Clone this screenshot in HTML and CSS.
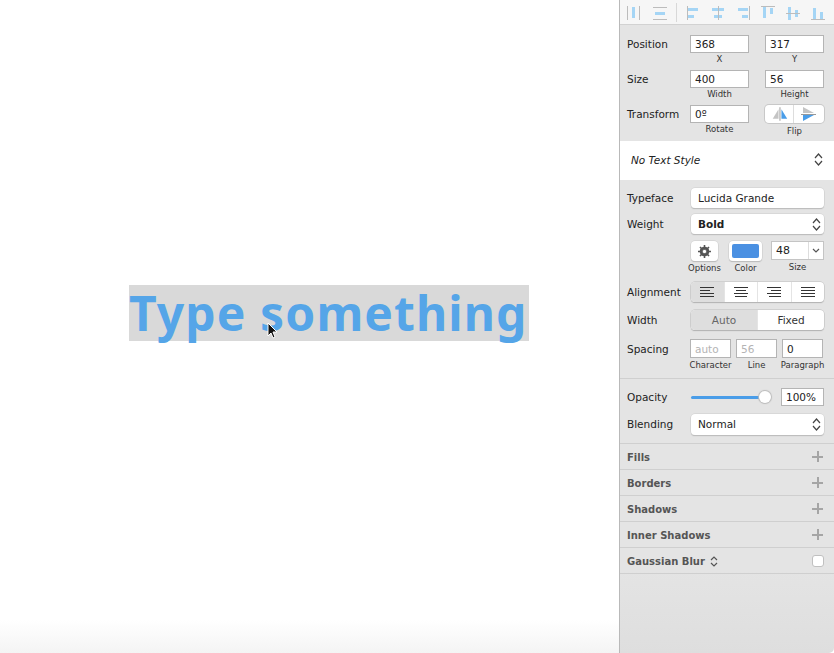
FILE: index.html
```html
<!DOCTYPE html>
<html>
<head>
<meta charset="utf-8">
<title>Type something</title>
<link rel="stylesheet" href="styles.css">
</head>
<body>

<div class="tela">

  <div class="canvas">
    <div class="selecao">
      <span class="texto">Type something</span>
      <svg class="cursor" width="12" height="18" viewBox="0 0 12 18"><path d="M1 1v13l3-3 2 5 2-1-2-5h4z" fill="#111" stroke="#fff" stroke-width="1"/></svg>
    </div>
  </div>

  <div class="painel">

    <div class="barra">
      <svg width="215" height="24" viewBox="0 0 215 24">
        <g fill="#a5d5f5"><rect x="13" y="7" width="3" height="11"/><rect x="36" y="12" width="10" height="3"/>
        <rect x="68" y="8" width="11" height="3"/><rect x="69" y="15" width="6" height="3"/>
        <rect x="93" y="8" width="12" height="3"/><rect x="95" y="15" width="8" height="3"/>
        <rect x="119" y="8" width="10" height="3"/><rect x="123" y="15" width="6" height="3"/>
        <rect x="144" y="7" width="3" height="11"/><rect x="151" y="8" width="3" height="6"/>
        <rect x="169" y="7" width="3" height="13"/><rect x="176" y="10" width="3" height="7"/>
        <rect x="194" y="8" width="3" height="11"/><rect x="201" y="12" width="3" height="7"/></g>
        <g fill="#bcbcbc"><rect x="8" y="6" width="1" height="14"/><rect x="20" y="6" width="1" height="14"/>
        <rect x="34" y="7" width="14" height="1"/><rect x="34" y="19" width="14" height="1"/>
        <rect x="57" y="3" width="1" height="19" fill="#d8d8d8"/>
        <rect x="68" y="6" width="1" height="14"/><rect x="99" y="6" width="1" height="14"/><rect x="130" y="6" width="1" height="14"/>
        <rect x="142" y="6" width="14" height="1"/><rect x="167" y="13" width="14" height="1"/><rect x="192" y="19" width="14" height="1"/></g>
      </svg>
    </div>

    <div class="bloco topo">
      <div class="linha">
        <label>Position</label>
        <div class="campo"><input class="caixa" value="368"><small>X</small></div>
        <div class="campo"><input class="caixa" value="317"><small>Y</small></div>
      </div>
      <div class="linha">
        <label>Size</label>
        <div class="campo"><input class="caixa" value="400"><small>Width</small></div>
        <div class="campo"><input class="caixa" value="56"><small>Height</small></div>
      </div>
      <div class="linha">
        <label>Transform</label>
        <div class="campo"><input class="caixa" value="0º"><small>Rotate</small></div>
        <div class="campo">
          <div class="flip">
            <svg width="29" height="18" viewBox="0 0 29 18"><path d="M8 14l6-10v10z" fill="#c4c4c4"/><path d="M17 4l6 10h-6z" fill="#4a9de8"/><rect x="15" y="2" width="1" height="14" fill="#999"/></svg>
            <svg width="30" height="18" viewBox="0 0 30 18"><path d="M9 2l11 6H9z" fill="#c4c4c4"/><path d="M9 10h11L9 16z" fill="#4a9de8"/><rect x="7" y="9" width="15" height="1" fill="#999"/></svg>
          </div>
          <small class="baixo">Flip</small>
        </div>
      </div>
    </div>

    <div class="estilo">
      <i>No Text Style</i>
      <svg class="setas" width="9" height="13" viewBox="0 0 9 13"><path d="M1 5l3.500-4L8 5M1 8l3.500 4L8 8" fill="none" stroke="#444" stroke-width="1.2"/></svg>
    </div>

    <div class="bloco texto-bloco">
      <div class="linha l26">
        <label>Typeface</label>
        <div class="botao largo">Lucida Grande</div>
      </div>
      <div class="linha l27">
        <label>Weight</label>
        <div class="botao largo"><b>Bold</b>
          <svg class="setas" width="9" height="13" viewBox="0 0 9 13"><path d="M1 5l3.500-4L8 5M1 8l3.500 4L8 8" fill="none" stroke="#444" stroke-width="1.2"/></svg>
        </div>
      </div>
      <div class="linha-opcoes">
        <div class="opcao o-options">
          <div class="botao quadrado"><svg width="13" height="13" viewBox="0 0 13 13"><circle cx="6.500" cy="6.500" r="3.600" fill="none" stroke="#555" stroke-width="2.400"/><path d="M6.500 0v13M0 6.500h13M2 2l9 9M11 2l-9 9" stroke="#555" stroke-width="1.600"/><circle cx="6.500" cy="6.500" r="1.700" fill="#fff"/></svg></div>
          <small>Options</small>
        </div>
        <div class="opcao o-color">
          <div class="botao cor"><span></span></div>
          <small>Color</small>
        </div>
        <div class="opcao o-size">
          <div class="tamanho"><span>48</span><em><svg width="8" height="5" viewBox="0 0 8 5"><path d="M1 1l3 3 3-3" fill="none" stroke="#555" stroke-width="1.200"/></svg></em></div>
          <small>Size</small>
        </div>
      </div>
      <div class="linha l28">
        <label>Alignment</label>
        <div class="segmento">
          <span class="ativo"><svg width="14" height="10" viewBox="0 0 14 10"><path d="M0 .5h14M0 3.500h10M0 6.500h14M0 9.500h14" stroke="#333"/></svg></span>
          <span><svg width="14" height="10" viewBox="0 0 14 10"><path d="M0 .5h14M2 3.500h10M0 6.500h14M1 9.500h12" stroke="#333"/></svg></span>
          <span><svg width="14" height="10" viewBox="0 0 14 10"><path d="M0 .5h14M4 3.500h10M0 6.500h14M2 9.500h12" stroke="#333"/></svg></span>
          <span><svg width="14" height="10" viewBox="0 0 14 10"><path d="M0 .5h14M0 3.500h14M0 6.500h14M0 9.500h14" stroke="#333"/></svg></span>
        </div>
      </div>
      <div class="linha l29">
        <label>Width</label>
        <div class="segmento dois">
          <span class="ativo">Auto</span>
          <span>Fixed</span>
        </div>
      </div>
      <div class="linha espacos">
        <label>Spacing</label>
        <div class="trio">
          <div class="campo"><input class="caixa apagado" value="auto"><small>Character</small></div>
          <div class="campo"><input class="caixa apagado" value="56"><small>Line</small></div>
          <div class="campo"><input class="caixa" value="0"><small>Paragraph</small></div>
        </div>
      </div>
    </div>

    <div class="bloco opac">
      <div class="linha l26 linha-slider">
        <label>Opacity</label>
        <div class="slider"><div class="trilho"></div><div class="bola"></div></div>
        <input class="caixa pct" value="100%">
      </div>
      <div class="linha l26">
        <label>Blending</label>
        <div class="botao largo normal">Normal
          <svg class="setas" width="9" height="13" viewBox="0 0 9 13"><path d="M1 5l3.500-4L8 5M1 8l3.500 4L8 8" fill="none" stroke="#444" stroke-width="1.2"/></svg>
        </div>
      </div>
    </div>

    <div class="secao"><b>Fills</b><span class="mais"></span></div>
    <div class="secao"><b>Borders</b><span class="mais"></span></div>
    <div class="secao"><b>Shadows</b><span class="mais"></span></div>
    <div class="secao"><b>Inner Shadows</b><span class="mais"></span></div>
    <div class="secao"><b>Gaussian Blur</b>
      <svg class="setas-blur" width="8" height="11" viewBox="0 0 8 11"><path d="M1 4l3-3 3 3M1 7l3 3 3-3" fill="none" stroke="#555" stroke-width="1.2"/></svg>
      <span class="check"></span>
    </div>

  </div>
</div>

</body>
</html>
```

FILE: styles.css
```css
*{ box-sizing: border-box; font-family: "DejaVu Sans", sans-serif; }
html,body{ margin: 0; padding: 0; height: 100%; overflow: hidden; background: #fff; }

.tela{ display: flex; width: 834px; height: 653px; }

.canvas{ width: 619px; padding: 285px 0 0 129px; background: linear-gradient(#fff 620px, #f4f4f4); }
.selecao{ position: relative; width: 400px; height: 56px; background: #d9d9d9; white-space: nowrap; }
.texto{ display: block; font-family: "Noto Sans", sans-serif; font-size: 48px; font-weight: bold; line-height: 55px; letter-spacing: 1.1px; color: #55a5e8; }
.cursor{ position: absolute; left: 138px; top: 37px; }

.painel{ width: 215px; height: 653px; border-left: 1px solid #b9b9b9; background: linear-gradient(#e4e4e4 570px, #dedede); border-bottom-right-radius: 5px; }

.barra{ height: 25px; background: #f6f6f6; border-bottom: 1px solid #d2d2d2; }
.barra svg{ display: block; margin-left: -1px; }

.bloco{ padding: 0 10px 0 7px; }
.topo{ padding-top: 10px; height: 116px; }
.linha{ display: flex; height: 35px; font-size: 11px; color: #222; }
.linha label{ width: 63px; flex: none; font-size: 10.5px; line-height: 19px; white-space: nowrap; }
.l26{ height: 26px; }
.l27{ height: 27px; }
.l28{ height: 28px; }
.l29{ height: 29px; }
.l26 label, .l27 label, .l28 label, .l29 label, .espacos label{ line-height: 20px; }
.linha-slider label{ line-height: 18px; }

.campo{ display: flex; flex-direction: column; align-items: center; width: 59px; margin-right: 16px; }
.campo:last-child{ margin-right: 0; }
.campo small{ font-size: 8.5px; line-height: 13px; color: #333; white-space: nowrap; }
.campo small.baixo{ margin-top: 2px; }
.caixa{ display: block; width: 59px; height: 18px; border: 1px solid #b4b4b4; background: #fff; padding: 0 4px; font-size: 10.5px; color: #222; outline: none; margin: 0; }

.flip{ display: flex; width: 59px; height: 18px; background: #fff; border-radius: 4px; box-shadow: 0 0 0 1px #c8c8c8; }
.flip svg:first-child{ border-right: 1px solid #ddd; }

.estilo{ display: flex; align-items: center; justify-content: space-between; height: 39px; padding: 0 11px 2px 11px; background: #fff; font-size: 10.5px; color: #222; }

.texto-bloco{ padding-top: 8px; height: 199px; border-bottom: 1px solid #cfcfcf; }

.botao{ position: relative; background: #fff; border-radius: 4px; box-shadow: 0 0 0 .5px #ccc, 0 1px 1px #aaa; font-size: 10.5px; color: #222; }
.largo{ width: 133px; height: 20px; margin-left: 1px; line-height: 20px; padding-left: 7px; }
.largo b{ font-size: 10.5px; }
.setas{ position: absolute; right: 3px; top: 4px; }
.estilo .setas{ position: static; }

.linha-opcoes{ display: flex; height: 41px; margin-left: 64px; }
.opcao{ display: flex; flex-direction: column; align-items: center; }
.opcao small{ font-size: 8.5px; line-height: 13px; color: #333; white-space: nowrap; margin-top: 1px; }
.o-options{ width: 27px; }
.o-color{ width: 34px; margin-left: 11px; }
.o-size{ width: 53px; margin-left: 9px; }
.quadrado{ display: flex; align-items: center; justify-content: center; width: 27px; height: 20px; }
.cor{ width: 33px; height: 20px; padding: 3px; }
.cor span{ display: block; width: 27px; height: 14px; background: #4a90e2; border-radius: 2px; }
.tamanho{ display: flex; width: 53px; height: 19px; background: #fff; border: 1px solid #c4c4c4; font-size: 11px; line-height: 17px; color: #222; }
.tamanho span{ flex: 1; padding-left: 4px; }
.tamanho em{ display: flex; align-items: center; justify-content: center; width: 15px; border-left: 1px solid #ddd; }

.segmento{ display: flex; width: 133px; height: 20px; margin-left: 1px; border-radius: 4px; overflow: hidden; background: #fff; box-shadow: 0 0 0 .5px #bbb, 0 1px 1px #aaa; font-size: 10.5px; color: #333; }
.segmento span{ flex: 1; display: flex; align-items: center; justify-content: center; border-left: 1px solid #e4e4e4; }
.segmento span.ativo{ background: #dedede; border-left: 0; }
.dois span{ padding-bottom: 1px; }
.dois .ativo{ color: #666; }

.trio{ display: flex; gap: 5px; }
.trio .campo{ width: 41px; margin: 0; }
.trio .caixa{ width: 41px; height: 19px; }
.trio small{ line-height: 14px; }
.apagado{ color: #b4b4b4; }

.opac{ height: 65px; padding-top: 9px; border-bottom: 1px solid #cfcfcf; }
.slider{ position: relative; width: 81px; height: 18px; flex: none; margin-right: 10px; }
.trilho{ position: absolute; left: 1px; right: 4px; top: 8px; height: 3px; background: #4a9de8; border-radius: 2px; }
.bola{ position: absolute; right: 0; top: 3px; width: 12px; height: 12px; border-radius: 50%; background: #fff; box-shadow: 0 0 1px 1px #bbb; }
.pct{ width: 43px; height: 18px; }
.normal{ height: 21px; line-height: 21px; }

.secao{ position: relative; display: flex; align-items: center; height: 26px; padding: 2px 0 0 7px; border-bottom: 1px solid #cfcfcf; font-size: 10px; color: #555; }
.secao b{ font-size: 10px; }
.mais{ position: absolute; right: 11px; top: 7px; width: 11px; height: 11px; background: linear-gradient(#a5a5a5,#a5a5a5) center/11px 2px no-repeat, linear-gradient(#a5a5a5,#a5a5a5) center/2px 11px no-repeat; }
.setas-blur{ margin-left: 5px; }
.check{ position: absolute; right: 10px; top: 7px; width: 12px; height: 12px; background: #fff; border: 1px solid #c0c0c0; border-radius: 3px; }
```
